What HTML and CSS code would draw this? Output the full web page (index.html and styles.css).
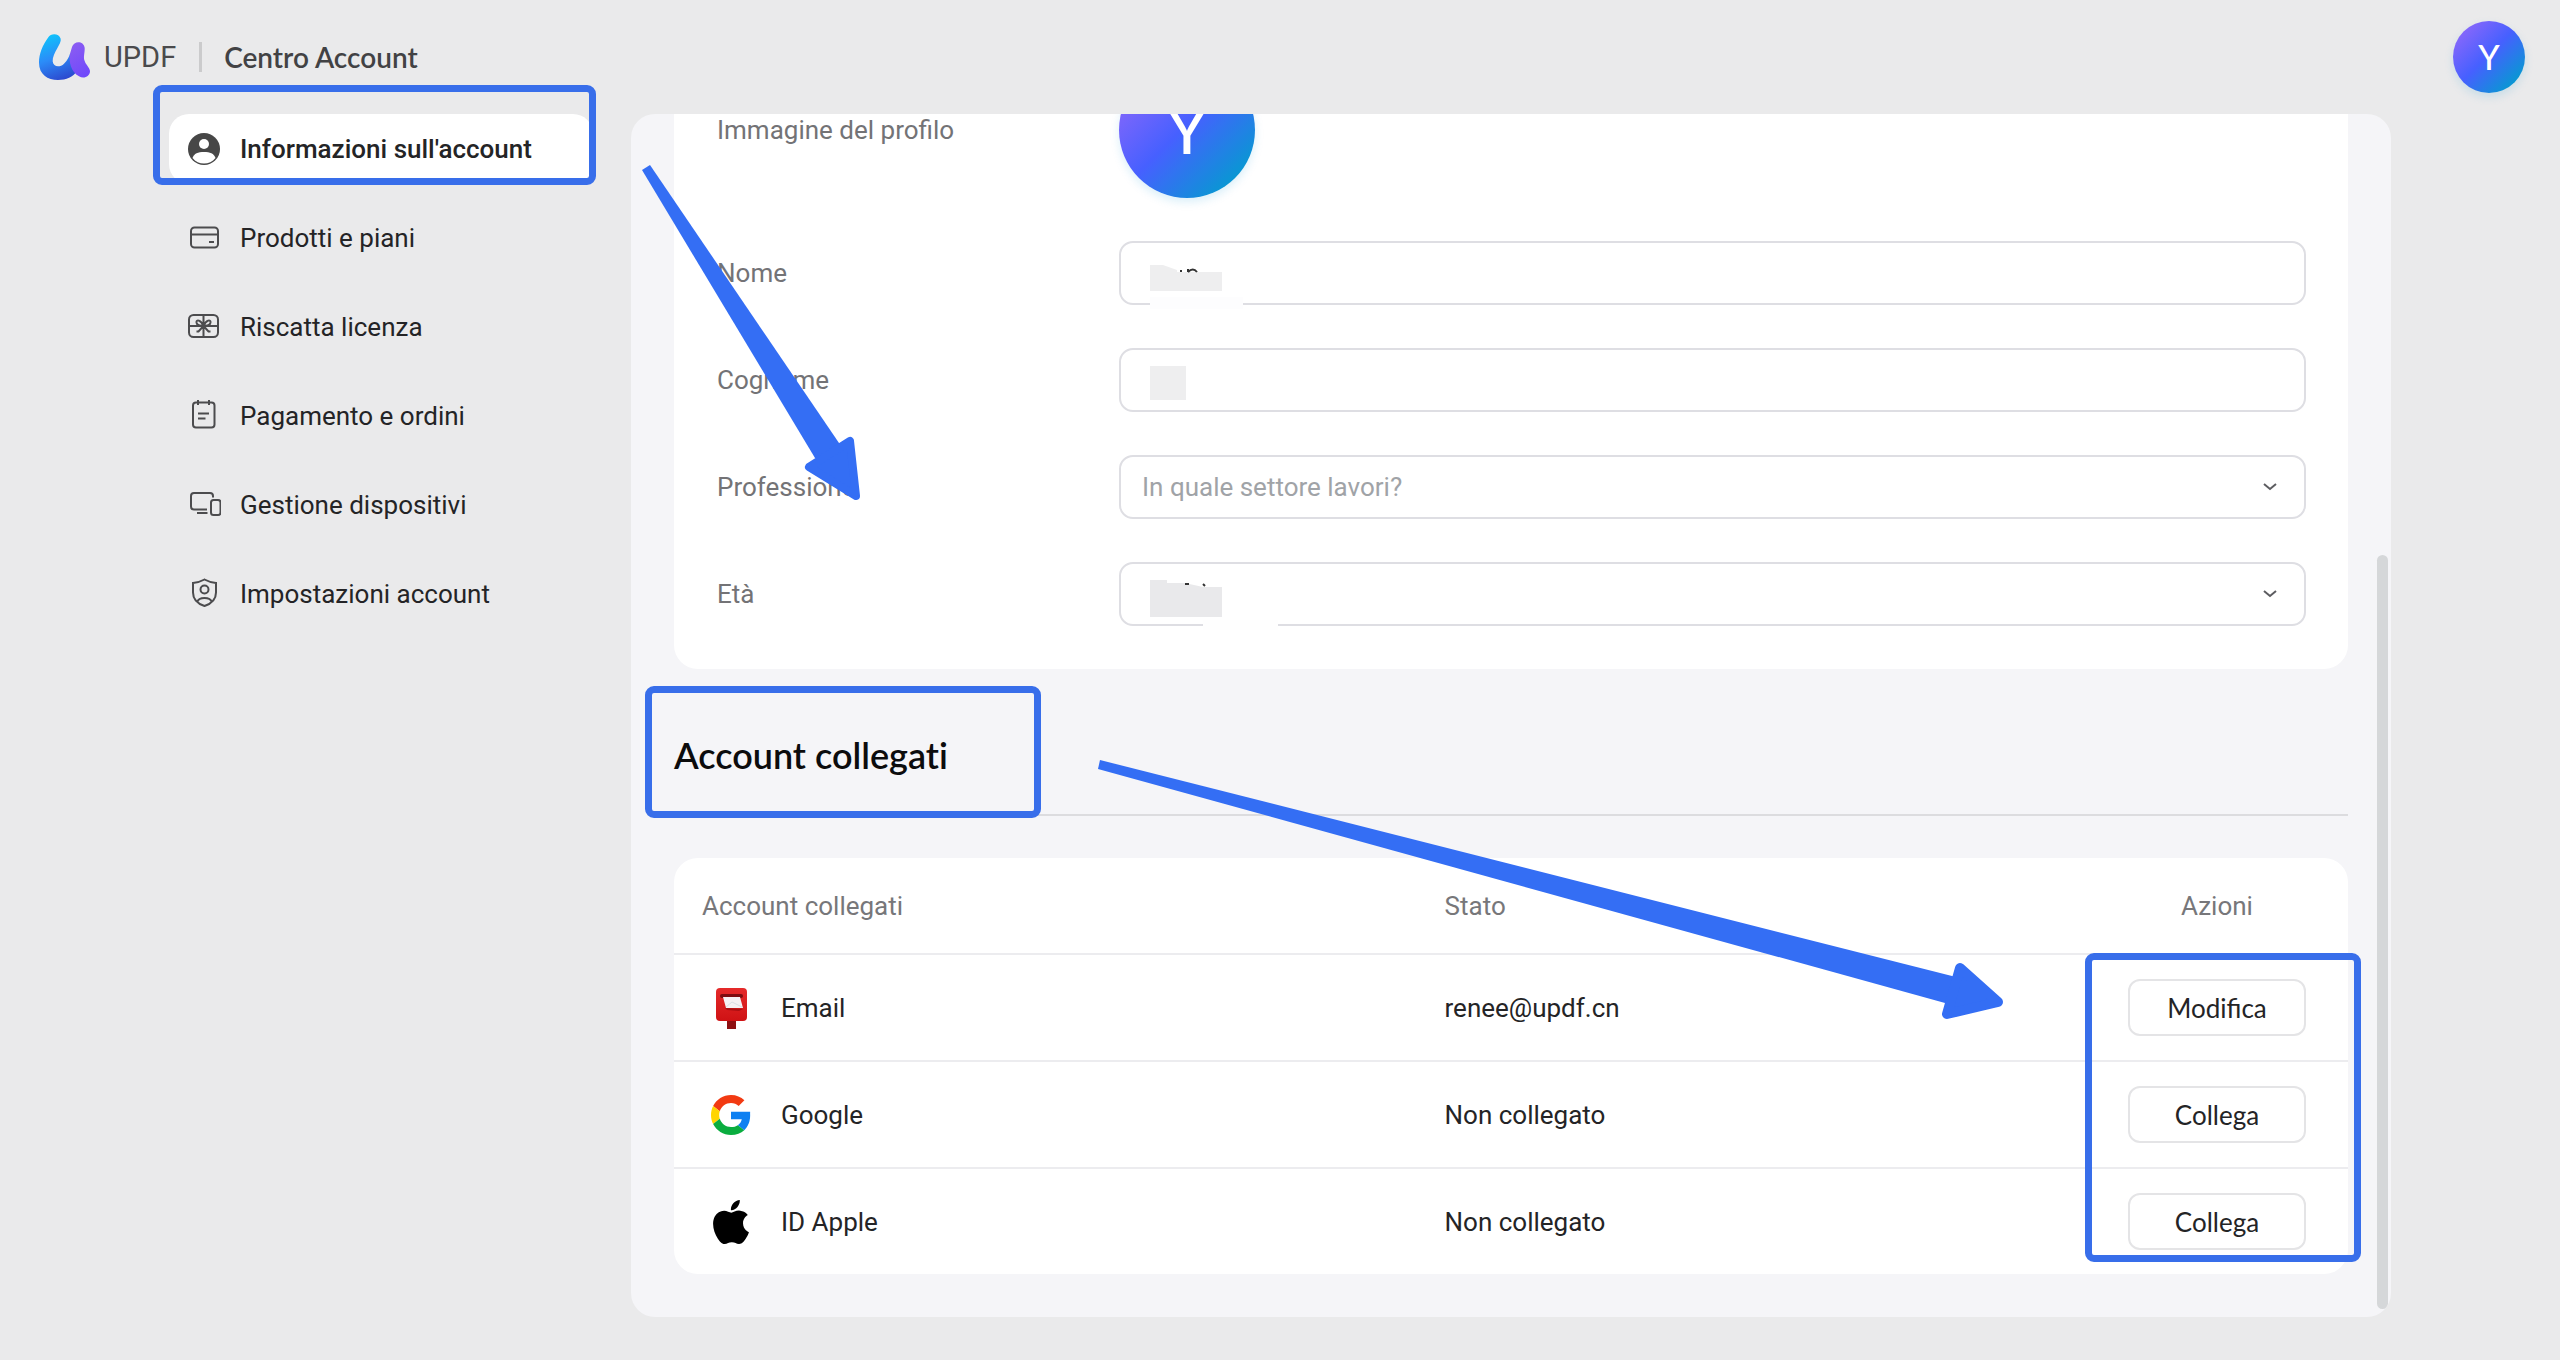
FILE: index.html
```html
<!DOCTYPE html>
<html lang="it">
<head>
<meta charset="utf-8">
<meta name="viewport" content="width=device-width, initial-scale=1">
<title>UPDF – Centro Account</title>
<link rel="stylesheet" href="styles.css">
</head>
<body>
<header class="topbar">
  <a class="brand" href="#">
    <svg class="brand-logo" viewBox="57 37 156 142" aria-hidden="true">
      <defs>
        <linearGradient id="logo-blue" x1="0.3" y1="0" x2="0.6" y2="1">
          <stop offset="0" stop-color="#0fc3fb"/>
          <stop offset="0.5" stop-color="#2b8cf8"/>
          <stop offset="1" stop-color="#2c49cf"/>
        </linearGradient>
        <linearGradient id="logo-violet" x1="0.3" y1="0" x2="0.7" y2="1">
          <stop offset="0" stop-color="#8a5cf2"/>
          <stop offset="1" stop-color="#7048fb"/>
        </linearGradient>
      </defs>
      <path fill="url(#logo-blue)" d="M85 49C92 36 117 36 122 53C126 68 97 95 98 121C100 139 120 140 132 128C142 118 148 106 150 98L172 150C158 168 140 177 114 177C83 177 57 160 57 125C57 98 68 72 85 49Z"/>
      <path fill="url(#logo-violet)" d="M156 78C162 58 191 59 194 80C195 95 189 107 194 120C198 132 208 138 210 150C210 166 192 175 177 166C153 151 146 125 150 98Z"/>
    </svg>
    <span class="brand-name">UPDF</span>
  </a>
  <span class="topbar-divider"></span>
  <h1 class="topbar-title">Centro Account</h1>
  <button class="avatar avatar-small" type="button" aria-label="Profilo">Y</button>
</header>

<div class="layout">
  <nav class="sidebar">
    <a class="nav-item active" href="#">
      <svg class="nav-icon" viewBox="0 0 34 34" aria-hidden="true">
        <circle cx="17" cy="17" r="16" fill="#474747"/>
        <circle cx="17" cy="12" r="5" fill="#fff"/>
        <path fill="#fff" d="M5.500 26C7 21.500 11 20 17 20S27 21.500 28.500 26C25.500 29.800 21.500 31.500 17 31.500S8.500 29.800 5.500 26Z"/>
      </svg>
      <span>Informazioni sull'account</span>
      <i class="mark mark-nav"></i>
    </a>
    <a class="nav-item" href="#">
      <svg class="nav-icon line" viewBox="0 0 34 34" aria-hidden="true">
        <rect x="4" y="6.500" width="27" height="20" rx="3.500"/>
        <path d="M4 13.500H31M22 21H27"/>
      </svg>
      <span>Prodotti e piani</span>
    </a>
    <a class="nav-item" href="#">
      <svg class="nav-icon line" viewBox="0 0 34 34" aria-hidden="true">
        <rect x="2" y="5" width="29" height="22" rx="4.500"/>
        <path d="M16.500 5V27M2 16H31M16.500 16C14 10 9 9 9.500 12.500C10 15.500 13 16 16.500 16C20 16 23 15.500 23.500 12.500C24 9 19 10 16.500 16L11.500 21.500H9.500M16.500 16L21.500 21.500H23.500"/>
      </svg>
      <span>Riscatta licenza</span>
    </a>
    <a class="nav-item" href="#">
      <svg class="nav-icon line" viewBox="0 0 34 34" aria-hidden="true">
        <rect x="6" y="3.500" width="21.500" height="25" rx="3"/>
        <path d="M11 1V6M22 1V6M11 14.500H22M11 19.500H18.500"/>
      </svg>
      <span>Pagamento e ordini</span>
    </a>
    <a class="nav-item" href="#">
      <svg class="nav-icon line" viewBox="0 0 34 34" aria-hidden="true">
        <path d="M20 21.500H7Q4 21.500 4 18.500V8Q4 5 7 5H23Q26 5 26 8V9.500M10 25H20.500"/>
        <rect x="24" y="12" width="9.500" height="15" rx="2.500"/>
      </svg>
      <span>Gestione dispositivi</span>
    </a>
    <a class="nav-item" href="#">
      <svg class="nav-icon line" viewBox="0 0 34 34" aria-hidden="true">
        <path d="M17.500 2.500C21 4.500 25 5.500 29 6V15.500C29 22 25 26.500 17.500 29C10 26.500 6 22 6 15.500V6C10 5.500 14 4.500 17.500 2.500Z"/>
        <circle cx="17.500" cy="12.500" r="4"/>
        <path d="M10 25C12 19.500 23 19.500 25 25"/>
      </svg>
      <span>Impostazioni account</span>
    </a>
  </nav>

  <main class="panel">
    <form class="card profile">
      <div class="field">
        <span class="field-label">Immagine del profilo</span>
        <span class="avatar avatar-large">Y</span>
      </div>
      <div class="field">
        <label class="field-label" for="nome">Nome</label>
        <div class="control">
          <input class="box" id="nome" type="text">
          <svg class="smudge" width="130" height="68" aria-hidden="true">
            <path fill="#fdfdfe" d="M31 56H124V68H31Z"/>
            <path fill="#eeeeef" d="M31 24H44L58 29V31H103V50H31Z"/>
            <path class="trace" d="M62 29V31M69 31V28M69 31Q74 26 78 31"/>
          </svg>
        </div>
      </div>
      <div class="field">
        <label class="field-label" for="cognome">Cognome</label>
        <div class="control">
          <input class="box" id="cognome" type="text">
          <svg class="smudge" width="130" height="68" aria-hidden="true">
            <path fill="#eeeeef" d="M31 18H67V52H31Z"/>
          </svg>
        </div>
      </div>
      <div class="field">
        <label class="field-label" for="professione">Professione</label>
        <div class="control">
          <select class="box" id="professione"><option>In quale settore lavori?</option></select>
          <svg class="chevron" viewBox="0 0 14 8" aria-hidden="true"><path d="M1 1L7 6L13 1"/></svg>
        </div>
      </div>
      <div class="field">
        <label class="field-label" for="eta">Età</label>
        <div class="control">
          <select class="box" id="eta"><option></option></select>
          <svg class="smudge" width="170" height="68" aria-hidden="true">
            <path fill="#fefefe" d="M84 58H159V68H84Z"/>
            <path fill="#e9e9eb" d="M31 18H48V21H66L84 25H103V55H31Z"/>
            <path class="trace" d="M66 22H70M84 22L86 24"/>
          </svg>
          <svg class="chevron" viewBox="0 0 14 8" aria-hidden="true"><path d="M1 1L7 6L13 1"/></svg>
        </div>
      </div>
    </form>

    <div class="section-head">
      <h2 class="section-title">Account collegati</h2>
      <i class="mark mark-title"></i>
    </div>

    <div class="card linked">
      <table class="accounts">
        <thead>
          <tr><th class="col-account">Account collegati</th><th>Stato</th><th class="col-action">Azioni</th></tr>
        </thead>
        <tbody>
          <tr>
            <td class="col-account"><div class="provider">
              <svg class="provider-icon" viewBox="0 0 58 58" aria-hidden="true">
                <defs><linearGradient id="mail-red" x1="0" y1="0" x2="0" y2="1"><stop offset="0" stop-color="#e52a2a"/><stop offset="1" stop-color="#cf1214"/></linearGradient></defs>
                <rect x="25" y="38" width="9" height="12" fill="#8e1012"/>
                <rect x="14" y="9" width="31" height="33" rx="4" fill="url(#mail-red)"/>
                <rect x="18" y="15" width="23" height="4" rx="2" fill="#7d0c10"/>
                <path fill="#a90f12" d="M23 29L41 30L37 32L25 31Z"/>
                <path fill="#f5f1f3" d="M21 18H38L41 29H24Z"/>
                <path fill="none" stroke="#d9dfe4" d="M24 28L30 23L40 28"/>
              </svg><span>Email</span></div></td>
            <td>renee@updf.cn</td>
            <td class="col-action"><button class="action" type="button">Modifica</button></td>
          </tr>
          <tr>
            <td class="col-account"><div class="provider">
              <svg class="provider-icon google" viewBox="0 0 48 48" aria-hidden="true">
                <path fill="#f23a12" d="M24 9.500c3.540 0 6.710 1.220 9.210 3.600l6.850-6.850C35.900 2.380 30.470 0 24 0 14.620 0 6.510 5.380 2.560 13.220l7.980 6.190C12.430 13.720 17.740 9.500 24 9.500z"/>
                <path fill="#0d80f2" d="M46.980 20H24v9.020h12.940c-.58 2.960-2.260 5.480-4.780 7.180l7.730 6c4.510-4.180 7.090-10.360 7.090-17.650 0-1.570-.15-3.090 0-4.550z"/>
                <path fill="#ffd500" d="M10.530 28.590c-.48-1.450-.76-2.990-.76-4.590s.27-3.140.76-4.590l-7.980-6.190C.92 16.460 0 20.120 0 24c0 3.880.92 7.540 2.560 10.780l7.970-6.190z"/>
                <path fill="#0aad3f" d="M24 48c6.480 0 11.930-2.130 15.890-5.810l-7.730-6c-2.150 1.450-4.920 2.300-8.160 2.300-6.260 0-11.570-4.220-13.470-9.910l-7.980 6.190C6.510 42.620 14.620 48 24 48z"/>
              </svg><span>Google</span></div></td>
            <td>Non collegato</td>
            <td class="col-action"><button class="action" type="button">Collega</button></td>
          </tr>
          <tr>
            <td class="col-account"><div class="provider">
              <svg class="provider-icon apple" viewBox="0 0 24 24" aria-hidden="true">
                <path d="M12.152 6.896c-.948 0-2.415-1.078-3.960-1.040-2.040.027-3.910 1.183-4.961 3.014-2.117 3.675-.546 9.103 1.519 12.090 1.013 1.454 2.208 3.090 3.792 3.039 1.520-.065 2.090-.987 3.935-.987 1.831 0 2.350.987 3.960.948 1.637-.026 2.676-1.480 3.676-2.948 1.156-1.688 1.636-3.325 1.662-3.415-.039-.013-3.182-1.221-3.220-4.857-.026-3.040 2.480-4.494 2.597-4.559-1.429-2.090-3.623-2.324-4.390-2.376-2-.156-3.675 1.090-4.610 1.090zM15.530 3.830c.843-1.012 1.400-2.427 1.245-3.830-1.207.052-2.662.805-3.532 1.818-.780.896-1.454 2.338-1.273 3.714 1.338.104 2.715-.688 3.559-1.701"/>
              </svg><span>ID Apple</span></div></td>
            <td>Non collegato</td>
            <td class="col-action"><button class="action" type="button">Collega</button></td>
          </tr>
        </tbody>
      </table>
      <i class="mark mark-actions"></i>
    </div>
    <span class="scrollbar"></span>
  </main>
</div>

<svg class="arrows" viewBox="0 0 2560 1360" aria-hidden="true">
  <path d="M642 170L650 165L839 443L843 462L830 465L815 458Z"/>
  <path class="head" stroke-width="8" d="M850 441L856 496L809 467Z"/>
  <path d="M1100 760L1098 769L1945 1003L1965 1003L1970 981L1952 976Z"/>
  <path class="head" stroke-width="10" d="M1960 968L1998 1002L1947 1014Z"/>
</svg>
</body>
</html>
```

FILE: styles.css
```css
* {
  box-sizing: border-box;
}

body {
  position: relative;
  display: flex;
  flex-direction: column;
  height: 100vh;
  margin: 0;
  overflow: hidden;
  background: #eaeaeb;
  color: #242426;
  font: 26px/32px Roboto, "Noto Sans", sans-serif;
}

a {
  color: inherit;
  text-decoration: none;
}

button,
input,
select {
  font: inherit;
  color: inherit;
}

/* Top bar */
.topbar {
  display: flex;
  flex: none;
  align-items: center;
  height: 114px;
  padding: 0 35px 0 39px;
}

.brand {
  display: flex;
  align-items: center;
  gap: 13px;
  color: #4a4a4c;
}

.brand-logo {
  width: 52px;
  height: 48px;
}

.brand-name {
  font-size: 29px;
}

.topbar-divider {
  width: 3px;
  height: 30px;
  margin: 0 22px 0 23px;
  background: #cbcbcc;
}

.topbar-title {
  margin: 0;
  color: #424244;
  font: 600 28px/32px Lato, "Noto Sans", sans-serif;
}

.avatar {
  display: flex;
  flex: none;
  align-items: center;
  justify-content: center;
  padding: 0;
  border: 0;
  border-radius: 50%;
  background: linear-gradient(135deg, #9068fa 8%, #4660ff 48%, #0a96d4 85%);
  box-shadow: 0 4px 10px rgba(10, 150, 212, 0.15);
  color: #fff;
  font-family: Lato, "Noto Sans", sans-serif;
  font-weight: 500;
}

.avatar-small {
  width: 72px;
  height: 72px;
  margin-left: auto;
  font-size: 34px;
}

.avatar-large {
  width: 136px;
  height: 136px;
  font-size: 64px;
}

/* Page columns */
.layout {
  display: flex;
  flex: 1;
  gap: 38px;
  min-height: 0;
  padding: 0 169px 43px;
}

.sidebar {
  display: flex;
  flex: none;
  flex-direction: column;
  gap: 19px;
  width: 424px;
}

.nav-item {
  position: relative;
  display: flex;
  align-items: center;
  gap: 19px;
  height: 70px;
  padding-left: 18px;
  border-radius: 20px;
}

.nav-item.active {
  background: #fff;
  font-weight: 500;
}

.nav-icon {
  width: 34px;
  height: 34px;
}

.line {
  fill: none;
  stroke: #4c4c4e;
  stroke-width: 2;
}

/* The panel shows the end of its scrolled content */
.panel {
  position: relative;
  display: flex;
  flex: 1;
  flex-direction: column;
  justify-content: flex-end;
  min-width: 0;
  overflow: hidden;
  padding: 0 43px 43px 43px;
  border-radius: 24px;
  background: #f5f5f8;
}

.card {
  flex: none;
  border-radius: 24px;
  background: #fff;
}

.profile {
  display: flex;
  flex-direction: column;
  gap: 43px;
  padding: 43px 42px 43px 43px;
}

.field {
  display: flex;
  align-items: center;
}

.field-label {
  flex: none;
  width: 402px;
  color: #737376;
}

.control {
  position: relative;
  display: flex;
  flex: 1;
}

.box {
  width: 100%;
  height: 64px;
  padding: 0 21px;
  border: 2px solid #dedee3;
  border-radius: 14px;
  outline: 0;
  background: #fff;
  appearance: none;
}

select.box {
  color: #a0a3a7;
}

.chevron {
  position: absolute;
  top: 28px;
  right: 29px;
  width: 14px;
  height: 8px;
  fill: none;
  stroke: #5c5c60;
  stroke-width: 2;
}

.smudge {
  position: absolute;
  top: 0;
  left: 0;
}

.trace {
  fill: none;
  stroke: #333;
  stroke-width: 2;
}

.section-head {
  position: relative;
  flex: none;
  padding: 62px 0 35px;
  border-bottom: 2px solid #dcdcdf;
}

.section-title {
  margin: 0;
  color: #0c0c0d;
  font: 600 36px/48px Lato, "Noto Sans", sans-serif;
  font-variant-ligatures: no-common-ligatures;
}

/* Linked accounts */
.linked {
  position: relative;
  margin-top: 42px;
}

.accounts {
  width: 100%;
  border-spacing: 0;
  table-layout: fixed;
}

.accounts th,
.accounts td {
  padding: 0 0 0 34px;
  text-align: left;
}

.accounts th {
  height: 95px;
  color: #77777a;
  font-weight: 400;
}

.accounts td {
  height: 107px;
  border-top: 2px solid #ececef;
}

.accounts .col-account {
  width: 44%;
  padding-left: 28px;
}

.accounts .col-action {
  width: 262px;
  padding: 0;
  text-align: center;
}

.provider {
  display: flex;
  align-items: center;
  gap: 21px;
}

.provider-icon {
  width: 58px;
  height: 58px;
}

.provider-icon.google {
  height: 40px;
}

.provider-icon.apple {
  height: 44px;
}

.action {
  width: 178px;
  height: 57px;
  padding: 0;
  border: 2px solid #e4e4e6;
  border-radius: 12px;
  background: #fff;
  font-family: Lato, "Noto Sans", sans-serif;
}

.scrollbar {
  position: absolute;
  right: 3px;
  bottom: 8px;
  width: 11px;
  height: 754px;
  border-radius: 6px;
  background: #d5d7d9;
}

/* Annotations drawn over the page */
.mark {
  position: absolute;
  border: 7px solid #386eea;
  border-radius: 9px;
  pointer-events: none;
}

.mark-nav {
  inset: -29px -3px -1px -16px;
}

.mark-title {
  top: 17px;
  left: -29px;
  width: 396px;
  height: 132px;
}

.mark-actions {
  right: -13px;
  bottom: 12px;
  width: 276px;
  height: 309px;
}

.arrows {
  position: absolute;
  top: 0;
  left: 0;
  width: 2560px;
  height: 1360px;
  fill: #346ef4;
  pointer-events: none;
}

.head {
  stroke: #346ef4;
  stroke-linejoin: round;
}
```
